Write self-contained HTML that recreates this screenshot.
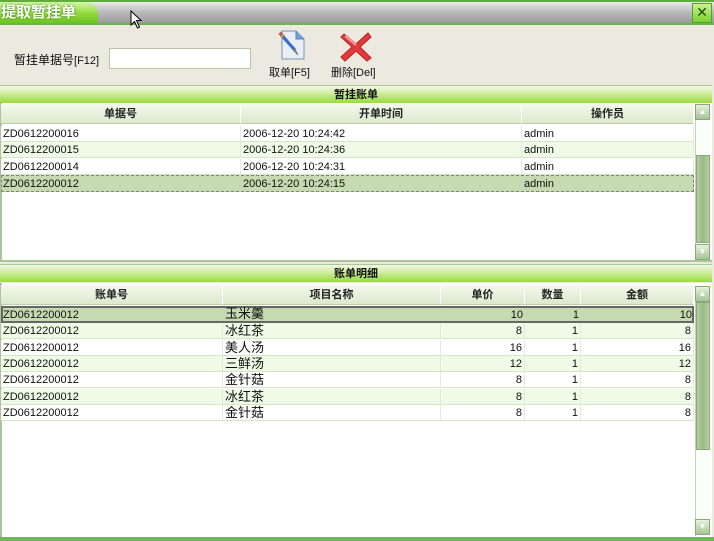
<!DOCTYPE html>
<html><head><meta charset="utf-8"><style>
*{margin:0;padding:0;box-sizing:border-box}
body{width:714px;height:541px;position:relative;background:#ece9e0;font-family:"Liberation Sans","Noto Sans CJK SC",sans-serif;font-size:11px;color:#111;overflow:hidden}
.a{position:absolute}
.title{left:0;top:0;width:714px;height:25px;background:linear-gradient(#ececec,#bdbdbd 45%,#9a9a9a);border-top:2px solid #5fae3b;border-bottom:2px solid #6bb548}
.tab{left:0;top:2px;width:98px;height:21px;background:linear-gradient(#d6f7a8,#8fd83c 55%,#6cc51f);border-radius:0 12px 0 0;color:#fff;font-size:15px;font-weight:bold;line-height:21px;padding-left:1px;text-shadow:0 0 2px #3c7a10}
.close{left:692px;top:3px;width:20px;height:20px;background:linear-gradient(#c9f28f,#7ccf30);border:1px solid #5a9e2c;text-align:center;line-height:17px;font-size:14px;color:#1a4a05}
.sec{left:0;width:712px;height:18px;background:linear-gradient(#f2f8e8,#c9ec93 50%,#98dc3a);text-align:center;font-weight:bold;font-size:11px;line-height:18px;border-top:1px solid #a8c79a}
.grid{left:0;background:#fff;border-left:2px solid #a9c59a}
.hd{position:absolute;height:20px;background:linear-gradient(#f4f9ec,#dbe9cc);border-right:1px solid #fff;border-bottom:1px solid #b8cfa8;text-align:center;line-height:20px;font-weight:bold;color:#222}
.c{position:absolute;height:16px;line-height:16px;padding:0 2px;white-space:nowrap;border-right:1px solid #e0ebd8;border-bottom:1px solid #d4e6c8;overflow:hidden}
.r{text-align:right}
.sb{background:#fbfdf8;border-left:1px solid #c0d4b3}
.btn{width:15px;height:16px;background:linear-gradient(#e6f2dc,#a7c496);border:1px solid #8aa87a;font-size:8px;text-align:center;line-height:14px;color:#fff}
.th{background:linear-gradient(90deg,#b6cfa4,#98b886,#b6cfa4);border:1px solid #8aa87a}
</style></head><body>
<div class="a title"></div>
<div class="a tab">提取暂挂单</div>
<svg class="a" style="left:130px;top:10px" width="14" height="20"><path d="M1 1 L1 15 L4.5 11.5 L7.5 18 L9.5 17 L6.5 10.5 L11 10.5 Z" fill="#fff" stroke="#000"/></svg>
<div class="a close">✕</div>

<div class="a" style="left:14px;top:51px;font-size:12px">暂挂单据号<span style="font-size:11px">[F12]</span></div>
<div class="a" style="left:109px;top:48px;width:142px;height:21px;background:#fff;border:1px solid #b5c8a5"></div>
<svg class="a" style="left:276px;top:28px" width="32" height="34"><path d="M6 3 H20 L28 11 V31 H6 Z" fill="#e8eef6" stroke="#7e93ad"/><path d="M20 3 V11 H28" fill="#6ea2e0" stroke="#5a80b0"/><path d="M3 6 L19 24 L22 27 L19 21 L5 4 Z" fill="#f0a040" stroke="#555" stroke-width=".6"/><path d="M3 6 L5 4 L7 6 L5 8Z" fill="#e05050"/><path d="M7 9 L19 22" stroke="#3a6fd0" stroke-width="3"/></svg>
<div class="a" style="left:269px;top:64px;font-size:11px">取单[F5]</div>
<svg class="a" style="left:339px;top:29px" width="34" height="34"><path d="M5 5 L17 15 L29 4 L32 8 L21 18 L32 29 L28 32 L17 22 L6 32 L2 28 L13 18 L2 8 Z" fill="#e23a3a" stroke="#b52020"/><path d="M6 7 L17 16" stroke="#f5a0a0" stroke-width="2"/></svg>
<div class="a" style="left:331px;top:64px;font-size:11px">删除[Del]</div>

<div class="a sec" style="top:85px">暂挂账单</div>
<div class="a grid" style="top:103px;width:712px;height:159px;border-bottom:2px solid #a9c59a"></div>
<div class="hd" style="left:1px;top:104px;width:240px">单据号</div>
<div class="hd" style="left:241px;top:104px;width:281px">开单时间</div>
<div class="hd" style="left:522px;top:104px;width:172px">操作员</div>
<div class="a sb" style="left:695px;top:104px;width:16px;height:156px"></div>
<div class="a btn" style="left:695px;top:104px">▲</div>
<div class="a th" style="left:696px;top:155px;width:14px;height:88px"></div>
<div class="a btn" style="left:695px;top:244px">▼</div>

<div class="a sec" style="top:264px">账单明细</div>
<div class="a grid" style="top:283px;width:712px;height:254px"></div>
<div class="hd" style="left:1px;top:285px;width:222px">账单号</div>
<div class="hd" style="left:223px;top:285px;width:218px">项目名称</div>
<div class="hd" style="left:441px;top:285px;width:84px">单价</div>
<div class="hd" style="left:525px;top:285px;width:56px">数量</div>
<div class="hd" style="left:581px;top:285px;width:113px">金额</div>
<div class="a sb" style="left:695px;top:286px;width:16px;height:250px"></div>
<div class="a btn" style="left:695px;top:286px">▲</div>
<div class="a th" style="left:696px;top:302px;width:14px;height:148px"></div>
<div class="a btn" style="left:695px;top:519px">▼</div>
<div class="a" style="left:0;top:537px;width:714px;height:4px;background:#6fb55a"></div>

<div style="position:absolute;left:0;top:0">
<div class="c" style="left:1px;top:126px;width:240px;background:#fff">ZD0612200016</div><div class="c" style="left:241px;top:126px;width:281px;background:#fff">2006-12-20 10:24:42</div><div class="c" style="left:522px;top:126px;width:172px;background:#fff">admin</div>
<div class="c" style="left:1px;top:142px;width:240px;background:#effbe6">ZD0612200015</div><div class="c" style="left:241px;top:142px;width:281px;background:#effbe6">2006-12-20 10:24:36</div><div class="c" style="left:522px;top:142px;width:172px;background:#effbe6">admin</div>
<div class="c" style="left:1px;top:159px;width:240px;background:#fff">ZD0612200014</div><div class="c" style="left:241px;top:159px;width:281px;background:#fff">2006-12-20 10:24:31</div><div class="c" style="left:522px;top:159px;width:172px;background:#fff">admin</div>
<div class="a" style="left:1px;top:175px;width:693px;height:17px;background:#c6dab2;border:1px dashed #7a8a70"></div>
<div class="c" style="left:1px;top:176px;width:240px;border:0">ZD0612200012</div><div class="c" style="left:241px;top:176px;width:281px;border:0">2006-12-20 10:24:15</div><div class="c" style="left:522px;top:176px;width:172px;border:0">admin</div>
</div>

<div style="position:absolute;left:0;top:0;font-size:11px">
<div class="a" style="left:1px;top:306px;width:693px;height:17px;background:#c6dab2;border:2px solid #666"></div>
<div class="c" style="left:1px;top:307px;width:222px;border:0">ZD0612200012</div><div class="c" style="left:223px;top:306px;width:218px;border:0;font-size:13px">玉米羹</div><div class="c r" style="left:441px;top:307px;width:84px;border:0">10</div><div class="c r" style="left:525px;top:307px;width:56px;border:0">1</div><div class="c r" style="left:581px;top:307px;width:113px;border:0">10</div>
<div class="c" style="left:1px;top:323px;width:222px;background:#effbe6">ZD0612200012</div><div class="c" style="left:223px;top:323px;width:218px;background:#effbe6;font-size:13px">冰红茶</div><div class="c r" style="left:441px;top:323px;width:84px;background:#effbe6">8</div><div class="c r" style="left:525px;top:323px;width:56px;background:#effbe6">1</div><div class="c r" style="left:581px;top:323px;width:113px;background:#effbe6">8</div>
<div class="c" style="left:1px;top:340px;width:222px;background:#fff">ZD0612200012</div><div class="c" style="left:223px;top:340px;width:218px;background:#fff;font-size:13px">美人汤</div><div class="c r" style="left:441px;top:340px;width:84px;background:#fff">16</div><div class="c r" style="left:525px;top:340px;width:56px;background:#fff">1</div><div class="c r" style="left:581px;top:340px;width:113px;background:#fff">16</div>
<div class="c" style="left:1px;top:356px;width:222px;background:#effbe6">ZD0612200012</div><div class="c" style="left:223px;top:356px;width:218px;background:#effbe6;font-size:13px">三鲜汤</div><div class="c r" style="left:441px;top:356px;width:84px;background:#effbe6">12</div><div class="c r" style="left:525px;top:356px;width:56px;background:#effbe6">1</div><div class="c r" style="left:581px;top:356px;width:113px;background:#effbe6">12</div>
<div class="c" style="left:1px;top:372px;width:222px;background:#fff">ZD0612200012</div><div class="c" style="left:223px;top:372px;width:218px;background:#fff;font-size:13px">金针菇</div><div class="c r" style="left:441px;top:372px;width:84px;background:#fff">8</div><div class="c r" style="left:525px;top:372px;width:56px;background:#fff">1</div><div class="c r" style="left:581px;top:372px;width:113px;background:#fff">8</div>
<div class="c" style="left:1px;top:389px;width:222px;background:#effbe6">ZD0612200012</div><div class="c" style="left:223px;top:389px;width:218px;background:#effbe6;font-size:13px">冰红茶</div><div class="c r" style="left:441px;top:389px;width:84px;background:#effbe6">8</div><div class="c r" style="left:525px;top:389px;width:56px;background:#effbe6">1</div><div class="c r" style="left:581px;top:389px;width:113px;background:#effbe6">8</div>
<div class="c" style="left:1px;top:405px;width:222px;background:#fff">ZD0612200012</div><div class="c" style="left:223px;top:405px;width:218px;background:#fff;font-size:13px">金针菇</div><div class="c r" style="left:441px;top:405px;width:84px;background:#fff">8</div><div class="c r" style="left:525px;top:405px;width:56px;background:#fff">1</div><div class="c r" style="left:581px;top:405px;width:113px;background:#fff">8</div>
</div>
</body></html>
